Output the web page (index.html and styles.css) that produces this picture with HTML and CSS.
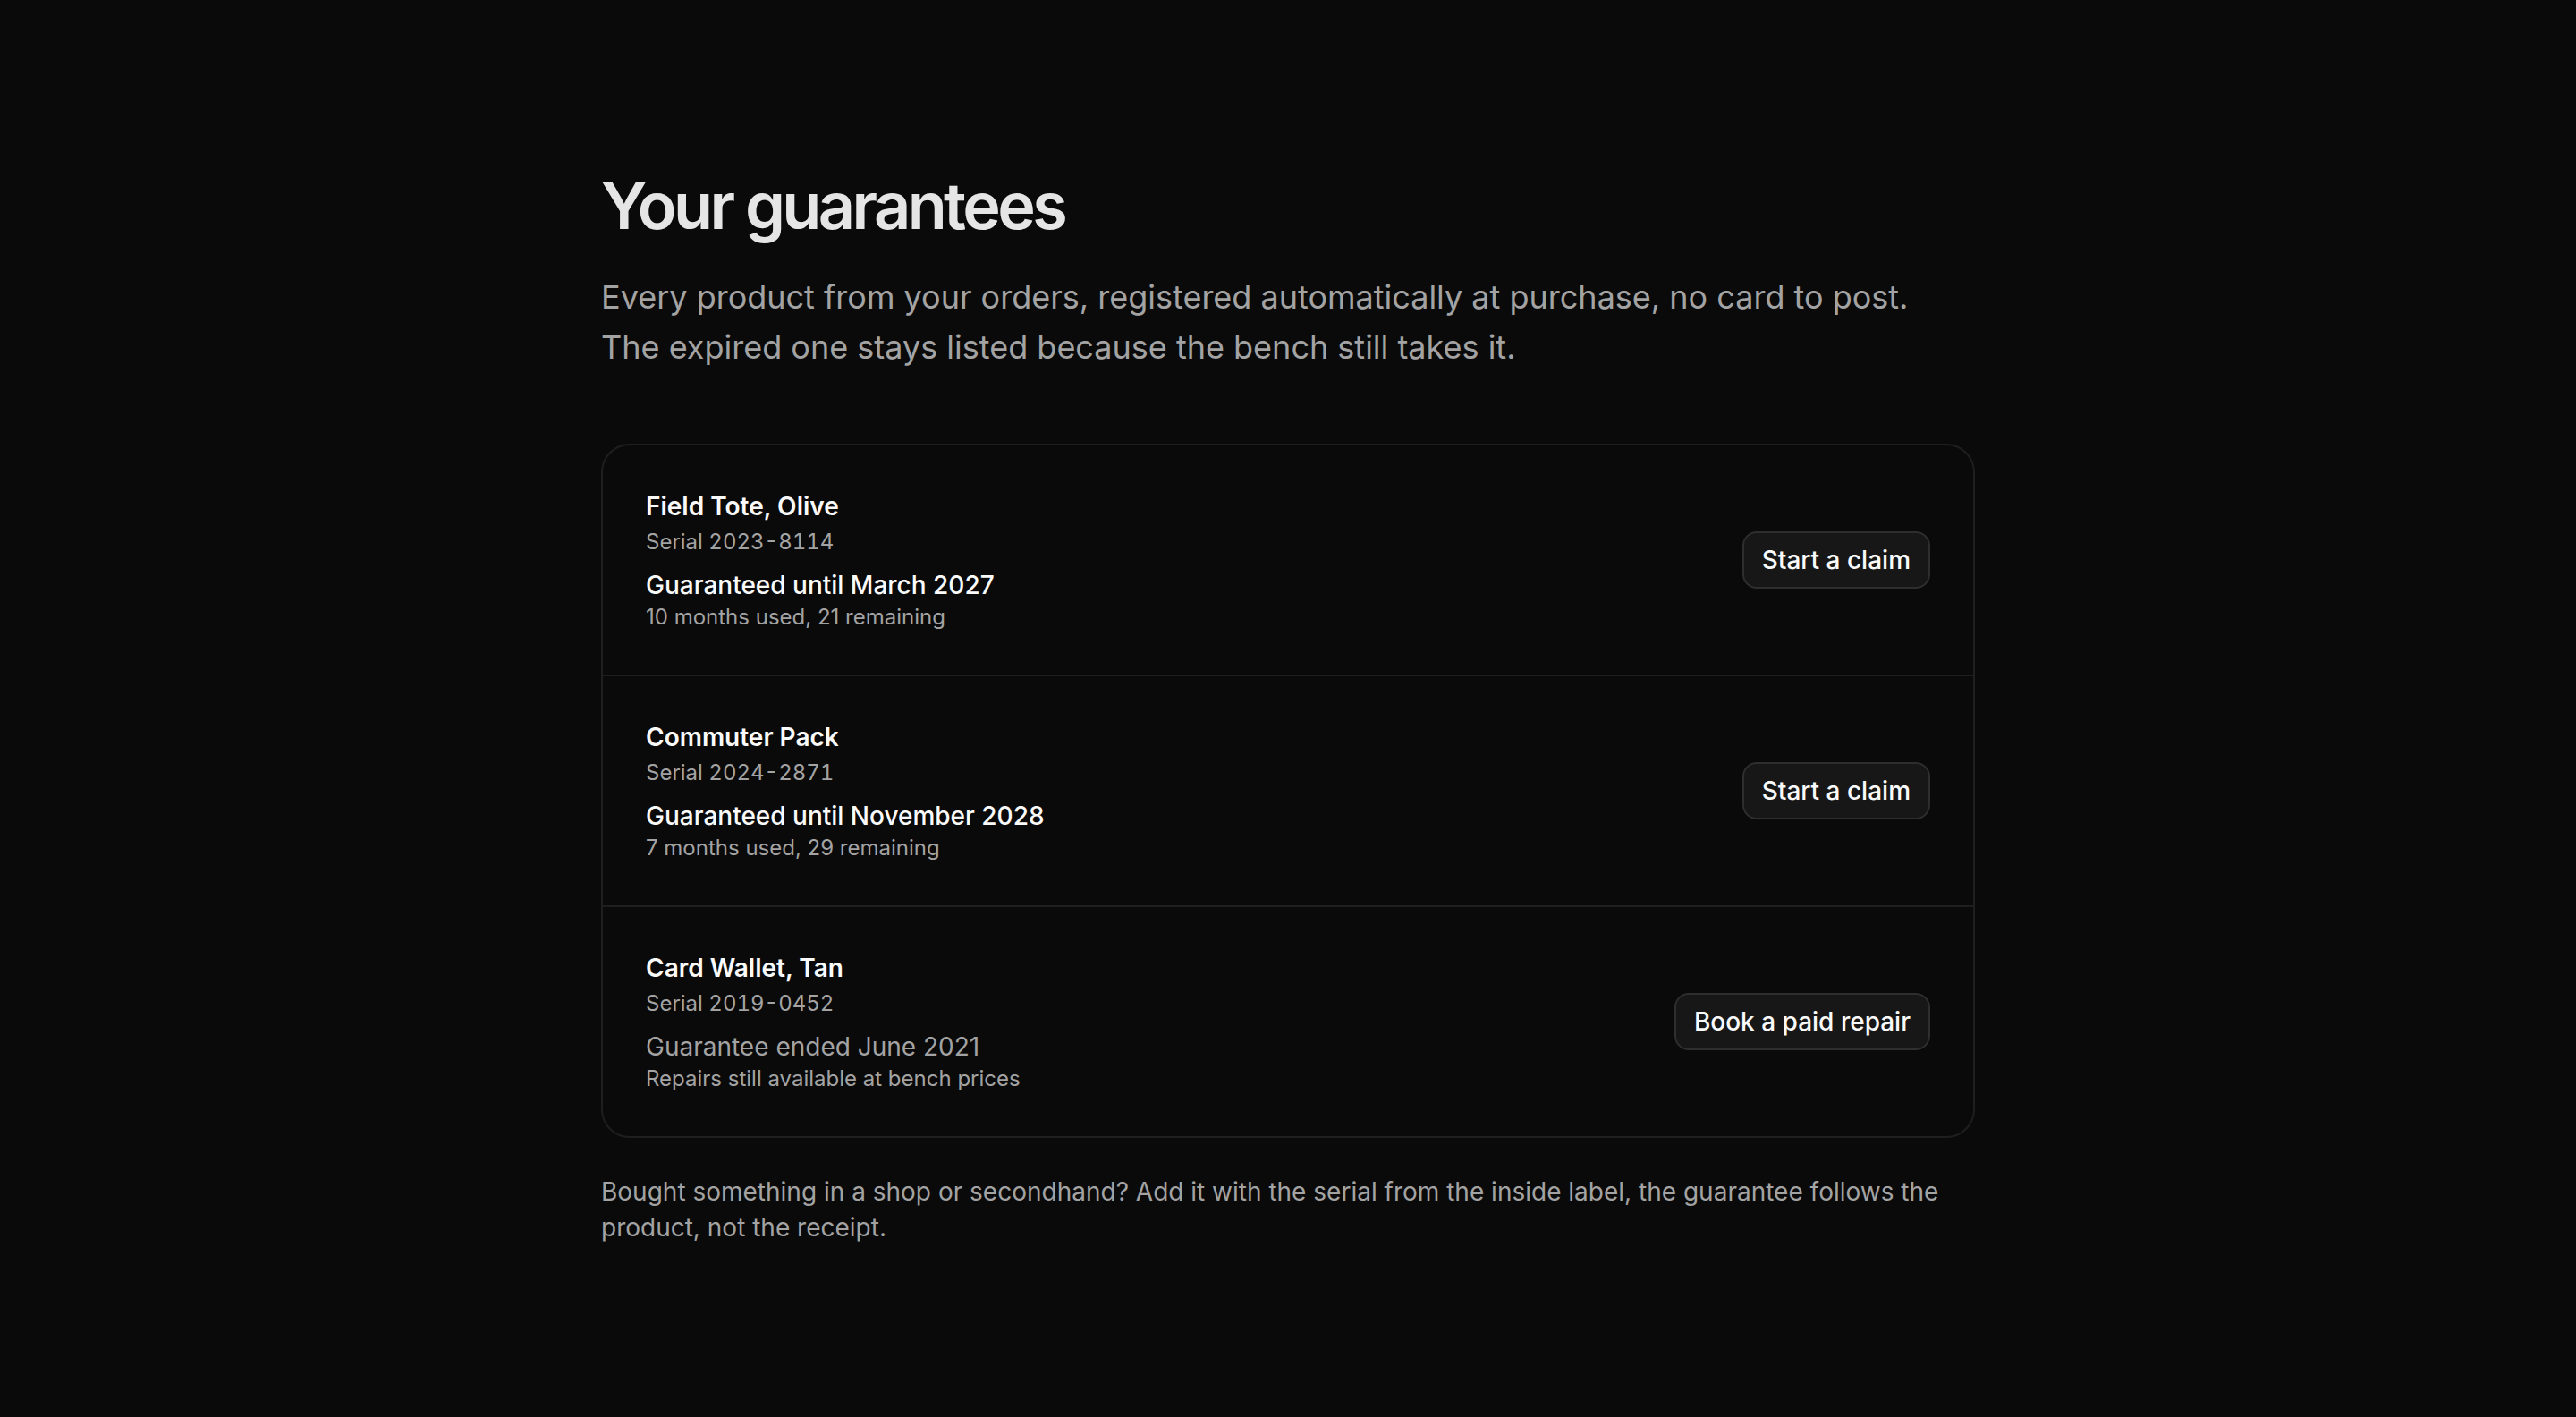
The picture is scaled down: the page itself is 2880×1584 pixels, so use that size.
FILE: index.html
```html
<!DOCTYPE html>
<html lang="en">
<head>
    <meta charset="UTF-8">
    <meta name="viewport" content="width=device-width, initial-scale=1.0">
    <title>Your guarantees</title>
    <link rel="stylesheet" href="styles.css">
</head>
<body>
    <main class="page">
        <h1>Your guarantees</h1>
        <p class="intro">Every product from your orders, registered automatically at purchase, no card to post. The expired one stays listed because the bench still takes it.</p>

        <!-- Guarantee list -->
        <ul class="guarantees">
            <li class="item">
                <div class="info">
                    <div class="name">Field Tote, Olive</div>
                    <div class="serial">Serial 2023-8114</div>
                    <div class="status">Guaranteed until March 2027</div>
                    <div class="detail">10 months used, 21 remaining</div>
                </div>
                <button class="btn">Start a claim</button>
            </li>
            <li class="item">
                <div class="info">
                    <div class="name">Commuter Pack</div>
                    <div class="serial">Serial 2024-2871</div>
                    <div class="status">Guaranteed until November 2028</div>
                    <div class="detail">7 months used, 29 remaining</div>
                </div>
                <button class="btn">Start a claim</button>
            </li>
            <li class="item">
                <div class="info">
                    <div class="name">Card Wallet, Tan</div>
                    <div class="serial">Serial 2019-0452</div>
                    <div class="status expired">Guarantee ended June 2021</div>
                    <div class="detail">Repairs still available at bench prices</div>
                </div>
                <button class="btn">Book a paid repair</button>
            </li>
        </ul>

        <p class="note">Bought something in a shop or secondhand? Add it with the serial from the inside label, the guarantee follows the product, not the receipt.</p>
    </main>
</body>
</html>
```

FILE: styles.css
```css
html {
    zoom: 2;
}

body {
    margin: 0;
    background-color: #0a0a0a;
    color: #fafafa;
    font-family: Inter, "Noto Sans", sans-serif;
    -webkit-font-smoothing: antialiased;
}

.page {
    max-width: 768px;
    margin: 0 auto;
    padding: 95px 0;
}

h1 {
    margin: 0;
    font-size: 36px;
    line-height: 40px;
    font-weight: 600;
    letter-spacing: -0.05em;
    color: #e5e5e5;
}

.intro {
    margin: 17px 0 0;
    max-width: 740px;
    font-size: 18px;
    line-height: 28px;
    color: #a3a3a3;
}

.guarantees {
    list-style: none;
    margin: 40px 0 0;
    padding: 0;
    border: 1px solid #1f1f1f;
    border-radius: 16px;
}

.item {
    display: flex;
    align-items: center;
    justify-content: space-between;
    padding: 24px;
    border-bottom: 1px solid #1f1f1f;
}

.item:last-child {
    border-bottom: none;
}

.name {
    font-size: 14px;
    line-height: 20px;
    font-weight: 600;
    color: #fafafa;
}

.serial {
    margin-top: 2px;
    font-size: 12px;
    line-height: 16px;
    color: #a3a3a3;
    font-variant-numeric: tabular-nums;
}

.status {
    margin-top: 6px;
    font-size: 14px;
    line-height: 20px;
    font-weight: 500;
    color: #fafafa;
}

.status.expired {
    font-weight: 400;
    color: #a3a3a3;
}

.detail {
    font-size: 12px;
    line-height: 16px;
    color: #a3a3a3;
}

.btn {
    padding: 5px 10px;
    font-family: inherit;
    font-size: 14px;
    line-height: 20px;
    font-weight: 500;
    color: #fafafa;
    background-color: #171717;
    border: 1px solid #2e2e2e;
    border-radius: 8px;
    cursor: pointer;
}

.note {
    margin: 20px 0 0;
    font-size: 14px;
    line-height: 20px;
    color: #a3a3a3;
}
```
